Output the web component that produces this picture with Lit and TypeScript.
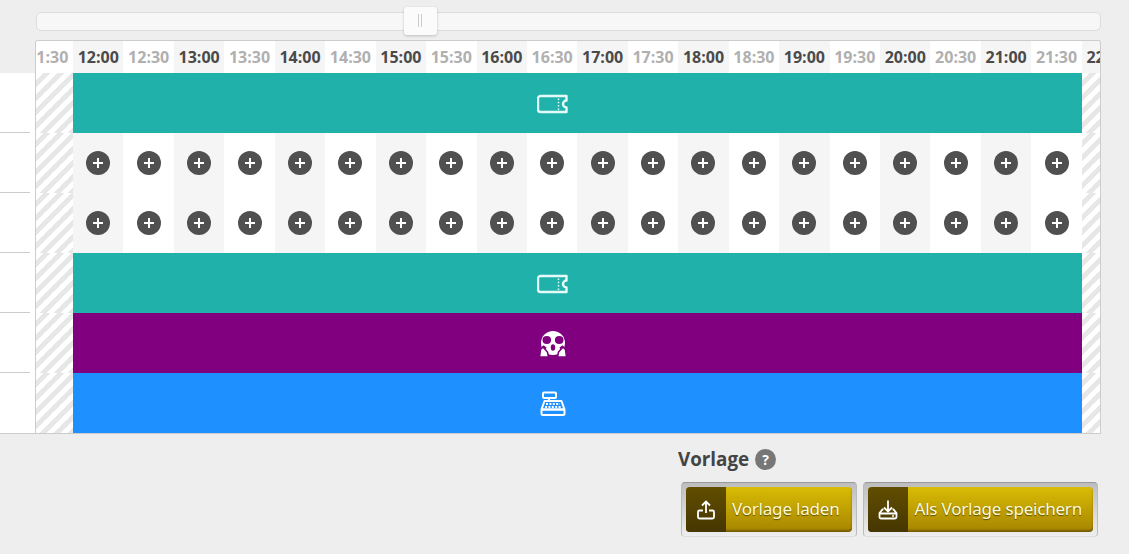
import { LitElement, html, css, svg } from 'lit'
import { customElement } from 'lit/decorators.js'
import { map } from 'lit/directives/map.js'

const TIMES = [
  '11:30', '12:00', '12:30', '13:00', '13:30', '14:00', '14:30', '15:00', '15:30', '16:00', '16:30',
  '17:00', '17:30', '18:00', '18:30', '19:00', '19:30', '20:00', '20:30', '21:00', '21:30', '22:00',
]
const SLOTS = TIMES.slice(1, 21)

const ticket = svg`
  <svg class="icon" width="32" height="20" viewBox="0 0 32 20" fill="none" stroke="#e6fbf9" stroke-width="2.400">
    <path d="M3.500 2h26v4.500a3.500 3.500 0 0 0 0 7V18h-26a2.500 2.500 0 0 1-2.500-2.500v-11A2.500 2.500 0 0 1 3.500 2z" stroke-linejoin="round"/>
    <path d="M21.500 4.500v12" stroke-width="1.500" stroke-dasharray="1.500 1.800"/>
  </svg>`

const wheel = svg`
  <svg class="icon" width="30" height="28" viewBox="0 0 30 28" fill="#fff">
    <circle cx="15" cy="13" r="12"/>
    <ellipse cx="8.800" cy="10" rx="4.300" ry="3.900" fill="#800080"/>
    <ellipse cx="21.200" cy="10" rx="4.300" ry="3.900" fill="#800080"/>
    <ellipse cx="15" cy="17.500" rx="2.200" ry="3.200" fill="#800080"/>
    <path d="M5 16l3 2.500M25 16l-3 2.500" stroke="#800080" stroke-width="2"/>
    <path d="M1.500 27l1-7.500 2.500-2.500 4.500 5 1 5z" stroke="#800080" stroke-width="1.600"/>
    <path d="M28.500 27l-1-7.500-2.500-2.500-4.500 5-1 5z" stroke="#800080" stroke-width="1.600"/>
  </svg>`

const register = svg`
  <svg class="icon" width="26" height="26" viewBox="0 0 26 26" fill="none" stroke="#fff" stroke-width="2">
    <rect x="3" y="1.500" width="13" height="5.500" rx="1"/>
    <path d="M9 7v3M4.500 10h17l3 8.500H1.500z" stroke-linejoin="round"/>
    <rect x="1.500" y="18.500" width="23" height="5.500" rx="1.500"/>
    <path d="M6 13h14M5 16h16" stroke-width="1.800" stroke-dasharray="2 1.400"/>
  </svg>`

const upload = svg`
  <svg width="20" height="20" viewBox="0 0 20 20" fill="none" stroke="#fff" stroke-width="1.800">
    <path d="M10 13V1.500M6 5.500l4-4 4 4"/>
    <path d="M7 10.500H3.500A1.500 1.500 0 0 0 2 12v5a1.500 1.500 0 0 0 1.500 1.500h13A1.500 1.500 0 0 0 18 17v-5a1.500 1.500 0 0 0-1.500-1.500H13"/>
  </svg>`

const download = svg`
  <svg width="20" height="20" viewBox="0 0 20 20" fill="none" stroke="#fff" stroke-width="1.800">
    <path d="M10 .5V11.500M6 7.500l4 4 4-4"/>
    <path d="M5.500 9.500H4.500L1.500 13V17A1.500 1.500 0 0 0 3 18.500h14a1.500 1.500 0 0 0 1.500-1.500V13l-3-3.500h-1M1.500 13.500H18"/>
    <circle cx="15" cy="16" r="1" fill="#fff" stroke="none"/>
  </svg>`

@customElement('app-root')
export default class AppRoot extends LitElement {
  static styles = css`
    :host {
      display: block;
      height: 554px;
      overflow: hidden;
      background: #eee;
      font-family: 'Open Sans', sans-serif;
      color: #444;
    }

    .slider {
      position: relative;
      box-sizing: border-box;
      height: 19px;
      margin: 12px 28px 0 36px;
      background: #f7f7f7;
      border: 1px solid #ddd;
      border-radius: 5px;
    }

    .handle {
      position: absolute;
      left: 367px;
      top: -6px;
      width: 33px;
      height: 28px;
      box-sizing: border-box;
      background: #fbfbfb;
      border-radius: 3px;
      box-shadow: 0 1px 3px rgba(0, 0, 0, 0.2);
    }

    .handle::after {
      content: '';
      position: absolute;
      left: 14px;
      top: 7px;
      width: 2px;
      height: 13px;
      border-left: 1px solid #ccc;
      border-right: 1px solid #ccc;
    }

    .board {
      display: flex;
      margin-top: 9px;
      border-bottom: 1px solid #ccc;
      margin-right: 28px;
    }

    .side {
      width: 35px;
      flex: none;
      padding-top: 33px;
      box-sizing: border-box;
    }

    .side div {
      box-sizing: border-box;
      height: 60px;
      background: #fff;
      position: relative;
    }

    .side div:not(:last-child)::after {
      content: '';
      position: absolute;
      left: 0;
      bottom: 0;
      width: 30px;
      border-bottom: 1px solid #ccc;
    }

    .timeline {
      flex: 1;
      min-width: 0;
      overflow: hidden;
      border: 1px solid #ccc;
      border-bottom: 0;
      border-radius: 3px 3px 0 0;
      background: #fff;
    }

    .times {
      display: flex;
      height: 32px;
      margin-left: -13.450px;
    }

    .time {
      flex: 0 0 50.45px;
      text-align: center;
      font-size: 16px;
      line-height: 32px;
      font-weight: 700;
      color: #b0b0b0;
      background: #fff;
    }

    .time.full {
      color: #4a4a4a;
      background: #f5f5f5;
    }

    .row {
      display: flex;
      height: 60px;
    }

    .stripes {
      background-image: repeating-linear-gradient(135deg, #fff 0 5px, #e7e7e7 5px 10px);
      flex: none;
    }

    .stripes.before {
      width: 37px;
    }

    .stripes.after {
      flex: 1;
    }

    .bar {
      flex: 0 0 1009px;
      box-sizing: border-box;
      padding: 2px 50px 0 0;
      display: flex;
      align-items: center;
      justify-content: center;
    }

    .icon {
      display: block;
    }

    .teal {
      background: #20b2aa;
    }

    .purple {
      background: #800080;
    }

    .blue {
      background: #1e90ff;
    }

    .slots {
      flex: 0 0 1009px;
      display: flex;
    }

    .slot {
      flex: 0 0 50.45px;
      display: flex;
      align-items: center;
      justify-content: center;
      background: #fff;
    }

    .slot:nth-child(odd) {
      background: #f5f5f5;
    }

    .plus {
      position: relative;
      width: 24px;
      height: 24px;
      border-radius: 50%;
      background: #505050;
    }

    .plus::before,
    .plus::after {
      content: '';
      position: absolute;
      background: #fff;
    }

    .plus::before {
      left: 7px;
      top: 11px;
      width: 10px;
      height: 2px;
    }

    .plus::after {
      left: 11px;
      top: 7px;
      width: 2px;
      height: 10px;
    }

    .footer {
      display: flex;
      flex-direction: column;
      width: 420px;
      margin: 13px 31px 0 auto;
    }

    .title {
      display: flex;
      align-items: center;
      gap: 6px;
      font-size: 18.800px;
      font-weight: 700;
      line-height: 25px;
    }

    .help {
      width: 21px;
      height: 21px;
      border-radius: 50%;
      background: #777;
      color: #fff;
      font-size: 14px;
      font-weight: 700;
      line-height: 21px;
      text-align: center;
    }

    .actions {
      display: flex;
      justify-content: flex-end;
      gap: 6px;
      margin-top: 10px;
    }

    .well {
      padding: 4px;
      border: 1px solid #ddd;
      border-top-color: #999;
      border-left-color: #bbb;
      border-right-color: #bbb;
      border-radius: 4px;
      background: linear-gradient(#bdbdbd, #eee);
    }

    .btn {
      display: flex;
      height: 45px;
      border: 0;
      padding: 0;
      border-radius: 4px;
      overflow: hidden;
      white-space: nowrap;
      font-family: 'Noto Sans', sans-serif;
      font-size: 17px;
      letter-spacing: -0.2px;
      color: #fffbd6;
      text-shadow: 0 1px 1px rgba(0, 0, 0, 0.5);
      background: linear-gradient(#d9bc05, #a68500);
      box-shadow: inset 0 -2px 2px rgba(70, 50, 0, 0.5);
    }

    .btn .glyph {
      width: 40px;
      height: 45px;
      display: flex;
      align-items: center;
      justify-content: center;
      background: linear-gradient(#614e00, #463600);
    }

    .btn .label {
      padding: 0 13px 0 6px;
      line-height: 43px;
    }

    .btn .label.long {
      padding-right: 11px;
    }
  `

  private renderBar(color: string, icon: unknown) {
    return html`
      <div class="row">
        <div class="stripes before"></div>
        <div class="bar ${color}">${icon}</div>
        <div class="stripes after"></div>
      </div>
    `
  }

  private renderSlots() {
    return html`
      <div class="row">
        <div class="stripes before"></div>
        <div class="slots">
          ${map(SLOTS, () => html`<div class="slot"><span class="plus"></span></div>`)}
        </div>
        <div class="stripes after"></div>
      </div>
    `
  }

  render() {
    return html`
      <div class="slider"><div class="handle"></div></div>
      <div class="board">
        <div class="side">
          ${map([0, 1, 2, 3, 4, 5], () => html`<div></div>`)}
        </div>
        <div class="timeline">
          <div class="times">
            ${map(TIMES, (t) => html`<div class="time ${t.endsWith(':00') ? 'full' : ''}">${t}</div>`)}
          </div>
          ${this.renderBar('teal', ticket)}
          ${this.renderSlots()}
          ${this.renderSlots()}
          ${this.renderBar('teal', ticket)}
          ${this.renderBar('purple', wheel)}
          ${this.renderBar('blue', register)}
        </div>
      </div>
      <div class="footer">
        <div class="title">Vorlage <span class="help">?</span></div>
        <div class="actions">
          <div class="well">
            <button class="btn"><span class="glyph">${upload}</span><span class="label">Vorlage laden</span></button>
          </div>
          <div class="well">
            <button class="btn"><span class="glyph">${download}</span><span class="label long">Als Vorlage speichern</span></button>
          </div>
        </div>
      </div>
    `
  }
}
